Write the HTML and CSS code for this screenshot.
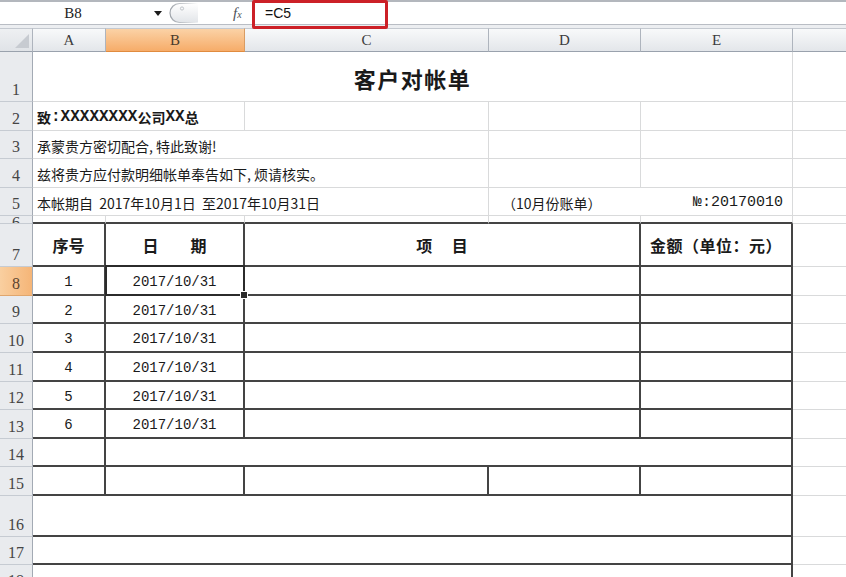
FILE: index.html
```html
<!DOCTYPE html>
<html lang="zh-CN">
<head>
<meta charset="utf-8">
<title>客户对帐单</title>
<link rel="stylesheet" href="styles.css">
</head>
<body>
<div class="app">
  <div class="fbar">
    <div class="namebox">B8</div>
    <div class="nb-arrow"><svg width="8" height="5" viewBox="0 0 8 5"><path d="M0 0H8L4 5Z" fill="#1c1c1c"/></svg></div>
    <div class="grip"><svg width="30" height="22" viewBox="0 0 30 22"><defs><linearGradient id="g" x1="0" y1="0" x2="0" y2="1"><stop offset="0" stop-color="#ffffff"/><stop offset="1" stop-color="#e2e5e9"/></linearGradient><linearGradient id="s" x1="0" y1="0" x2="1" y2="0"><stop offset="0" stop-color="#9ea3aa"/><stop offset="1" stop-color="#9ea3aa" stop-opacity="0"/></linearGradient></defs><path d="M30 1.5H11.5A9.5 9.5 0 0 0 11.5 20.5H30" fill="url(#g)" stroke="url(#s)" stroke-width="1.2"/><circle cx="14" cy="6.5" r="1.6" fill="none" stroke="#b9bdc3" stroke-width="0.9"/></svg></div>
    <div class="fx"><span class="fx-f">f</span><span class="fx-x">x</span></div>
    <div class="formula">=C5</div>
    <div class="mark"></div>
  </div>
  <div class="spacer"></div>
  <div class="heads">
    <div class="h corner"><svg width="14" height="14" viewBox="0 0 14 14"><path d="M14 0V14H0Z" fill="#c7cbd1"/></svg></div>
    <div class="h">A</div>
    <div class="h sel">B</div>
    <div class="h">C</div>
    <div class="h">D</div>
    <div class="h">E</div>
    <div class="h last"></div>
  </div>
  <div class="sheet">
    <!-- row 1 -->
    <div class="rh">1</div>
    <div class="c s5 title">客户对帐单</div>
    <div class="c f"></div>
    <!-- row 2 -->
    <div class="rh">2</div>
    <div class="c s2 txt bold">致<span class="mono">:XXXXXXXX</span>公司<span class="mono">XX</span>总</div>
    <div class="c"></div>
    <div class="c"></div>
    <div class="c"></div>
    <div class="c f"></div>
    <!-- row 3 -->
    <div class="rh">3</div>
    <div class="c s3 txt">承蒙贵方密切配合, 特此致谢!</div>
    <div class="c"></div>
    <div class="c"></div>
    <div class="c f"></div>
    <!-- row 4 -->
    <div class="rh">4</div>
    <div class="c s3 txt">兹将贵方应付款明细帐单奉告如下, 烦请核实。</div>
    <div class="c"></div>
    <div class="c"></div>
    <div class="c f"></div>
    <!-- row 5 -->
    <div class="rh">5</div>
    <div class="c s3 txt">本帐期自&nbsp; 2017年10月1日&nbsp; 至2017年10月31日</div>
    <div class="c s2 period"><span class="month">（10月份账单）</span><span class="no">№:20170010</span></div>
    <div class="c f"></div>
    <!-- row 6 -->
    <div class="rh thin">6</div>
    <div class="c tb"></div>
    <div class="c tb"></div>
    <div class="c tb"></div>
    <div class="c tb"></div>
    <div class="c tb"></div>
    <div class="c f"></div>
    <!-- row 7 -->
    <div class="rh">7</div>
    <div class="c t th">序号</div>
    <div class="c t th">日　　期</div>
    <div class="c t th s2">项　 目</div>
    <div class="c t th wide">金额（单位：元）</div>
    <div class="c f"></div>
    <!-- row 8 -->
    <div class="rh on">8</div>
    <div class="c t num">1</div>
    <div class="c t date active">2017/10/31<span class="cursor"></span><span class="handle"></span></div>
    <div class="c t s2"></div>
    <div class="c t"></div>
    <div class="c f"></div>
    <!-- row 9 -->
    <div class="rh">9</div>
    <div class="c t num">2</div>
    <div class="c t date">2017/10/31</div>
    <div class="c t s2"></div>
    <div class="c t"></div>
    <div class="c f"></div>
    <!-- row 10 -->
    <div class="rh">10</div>
    <div class="c t num">3</div>
    <div class="c t date">2017/10/31</div>
    <div class="c t s2"></div>
    <div class="c t"></div>
    <div class="c f"></div>
    <!-- row 11 -->
    <div class="rh">11</div>
    <div class="c t num">4</div>
    <div class="c t date">2017/10/31</div>
    <div class="c t s2"></div>
    <div class="c t"></div>
    <div class="c f"></div>
    <!-- row 12 -->
    <div class="rh">12</div>
    <div class="c t num">5</div>
    <div class="c t date">2017/10/31</div>
    <div class="c t s2"></div>
    <div class="c t"></div>
    <div class="c f"></div>
    <!-- row 13 -->
    <div class="rh">13</div>
    <div class="c t num">6</div>
    <div class="c t date">2017/10/31</div>
    <div class="c t s2"></div>
    <div class="c t"></div>
    <div class="c f"></div>
    <!-- row 14 -->
    <div class="rh">14</div>
    <div class="c t"></div>
    <div class="c t s4"></div>
    <div class="c f"></div>
    <!-- row 15 -->
    <div class="rh">15</div>
    <div class="c t"></div>
    <div class="c t"></div>
    <div class="c t"></div>
    <div class="c t"></div>
    <div class="c t"></div>
    <div class="c f"></div>
    <!-- row 16 -->
    <div class="rh">16</div>
    <div class="c t s5"></div>
    <div class="c f"></div>
    <!-- row 17 -->
    <div class="rh">17</div>
    <div class="c t s5"></div>
    <div class="c f"></div>
    <!-- row 18 -->
    <div class="rh">18</div>
    <div class="c t s5"></div>
    <div class="c f"></div>
  </div>
</div>
</body>
</html>
```

FILE: styles.css
```css
html, body {
  margin: 0;
  padding: 0;
  background: #ffffff;
}

body {
  width: 846px;
  height: 577px;
  overflow: hidden;
  font-family: "Noto Sans CJK SC", sans-serif;
  color: #1a1a1a;
}

.app {
  width: 846px;
}

/* formula bar */
.fbar {
  position: relative;
  height: 22px;
  display: flex;
  align-items: center;
  background: #ffffff;
  border-top: 2px solid #b3b7bd;
  border-bottom: 1px solid #b9bdc4;
}

.namebox {
  width: 146px;
  text-align: center;
  font-family: "Liberation Serif", serif;
  font-size: 15px;
  color: #222;
  box-sizing: border-box;
}

.nb-arrow {
  width: 8px;
  height: 5px;
  margin-left: 8px;
  display: flex;
}

.grip {
  margin-left: 6px;
  width: 30px;
  height: 22px;
  display: flex;
}

.fx {
  margin-left: 35px;
  width: 16px;
  font-family: "Liberation Serif", serif;
  font-style: italic;
  color: #4c5157;
  display: flex;
  align-items: baseline;
}

.fx-f {
  font-size: 15px;
}

.fx-x {
  font-size: 10px;
}

.formula {
  margin-left: 3px;
  padding-left: 13px;
  flex: 1;
  font-family: "Liberation Sans", sans-serif;
  font-size: 14px;
  color: #111;
}

.mark {
  position: absolute;
  left: 252px;
  top: -2px;
  width: 136px;
  height: 29px;
  border: 3px solid #cc2027;
  border-radius: 2px;
  box-sizing: border-box;
}

.spacer {
  height: 3px;
  background: #eceef1;
}

/* column headers */
.heads {
  display: grid;
  grid-template-columns: 33px 73px 139px 244px 152px 152px 1fr;
  height: 24px;
}

.h {
  box-sizing: border-box;
  background: linear-gradient(#f8f9fa, #e3e6ea);
  border-top: 1px solid #c4c9d0;
  border-right: 1px solid #aeb4bd;
  border-bottom: 1px solid #9aa2ad;
  display: flex;
  align-items: center;
  justify-content: center;
  font-family: "Liberation Serif", serif;
  font-size: 15px;
  color: #3c3c3c;
  padding-top: 1px;
}

.h.corner {
  justify-content: flex-end;
  align-items: flex-end;
  padding: 0 3px 3px 0;
  background: linear-gradient(#eef0f2, #e0e3e7);
}

.h.sel {
  background: linear-gradient(#fbd2a6, #f6ac69);
  border-right-color: #d99c63;
  border-bottom-color: #e08b3f;
  color: #4a3b2c;
}

.h.last {
  border-right: none;
}

/* sheet grid */
.sheet {
  display: grid;
  grid-template-columns: 33px 73px 139px 244px 152px 152px 1fr;
  grid-template-rows: 50px 29px 28px 29px 28px 8px 43px 29px 28px 29px 29px 28px 29px 28px 29px 41px 28px 28px;
}

.rh {
  box-sizing: border-box;
  background: #e9ebee;
  border-right: 1px solid #a3aab4;
  border-bottom: 1px solid #c6cbd2;
  display: flex;
  align-items: flex-end;
  justify-content: center;
  font-family: "Liberation Serif", serif;
  font-size: 16px;
  line-height: 18px;
  color: #454545;
  padding-bottom: 2px;
  overflow: hidden;
}

.rh.thin {
  padding-bottom: 0;
  line-height: 14px;
  align-items: flex-start;
}

.rh.on {
  background: linear-gradient(90deg, #f9cfa0, #f5b577);
  color: #5a4530;
  border-bottom-color: #e0a66d;
}

.c {
  box-sizing: border-box;
  border-right: 1px solid #d9dadb;
  border-bottom: 1px solid #d9dadb;
  display: flex;
  align-items: center;
  white-space: nowrap;
  overflow: hidden;
  font-size: 14px;
  min-width: 0;
}

.c.f {
  border-right: none;
}

.s2 { grid-column: span 2; }
.s3 { grid-column: span 3; }
.s4 { grid-column: span 4; }
.s5 { grid-column: span 5; }

.title {
  justify-content: center;
  font-size: 22px;
  font-weight: bold;
  padding-top: 3px;
  letter-spacing: 1.5px;
}

.txt {
  padding-left: 4px;
  padding-top: 2px;
}

.bold {
  font-weight: bold;
}

.mono {
  font-family: "Liberation Mono", monospace;
  font-size: 16px;
}

.period {
  padding-top: 2px;
}

.month {
  padding-left: 13px;
}

.no {
  margin-left: auto;
  padding-right: 9px;
  font-family: "Liberation Mono", "Noto Sans CJK SC", monospace;
  font-size: 15px;
}

.tb {
  border-bottom: 2px solid #444;
}

.t {
  border-right: 2px solid #444;
  border-bottom: 2px solid #444;
  justify-content: center;
}

.th {
  font-size: 16px;
  font-weight: bold;
  padding-top: 1px;
}

.th.wide {
  letter-spacing: 0.5px;
}

.num {
  font-family: "Liberation Mono", "Noto Sans CJK SC", monospace;
  font-size: 14px;
  padding-top: 3px;
}

.date {
  font-family: "Liberation Mono", monospace;
  font-size: 14px;
  padding-top: 3px;
}

.active {
  position: relative;
  overflow: visible;
}

.cursor {
  position: absolute;
  left: -1px;
  top: -2px;
  right: -2px;
  bottom: -2px;
  border: 2px solid #2b2b2b;
}

.handle {
  position: absolute;
  right: -5px;
  bottom: -5px;
  width: 6px;
  height: 6px;
  background: #2b2b2b;
  border: 1px solid #ffffff;
  z-index: 2;
}
```
